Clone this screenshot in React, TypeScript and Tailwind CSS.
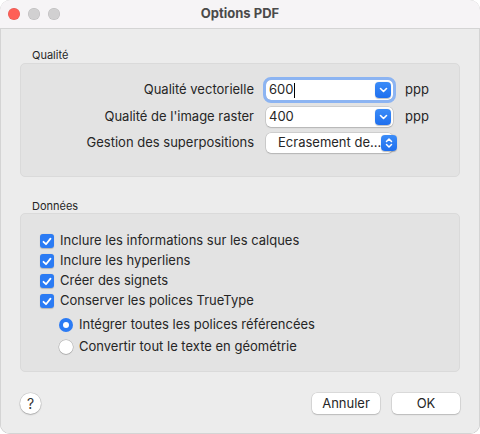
import React from "react";

const font = { fontFamily: "Inter, 'Noto Sans', sans-serif" };

function Chevron({ double }: { double?: boolean }) {
  return (
    <span className="flex h-[16px] w-[16px] shrink-0 items-center justify-center rounded-[4px] bg-gradient-to-b from-[#3b8cf8] to-[#1f6fee] shadow-[0_0.5px_1px_rgba(0,0,0,0.25)]">
      {double ? (
        <svg width="8" height="12" viewBox="0 0 8 12" fill="none">
          <path d="M1.5 4.5L4 2l2.5 2.5M1.5 7.5L4 10l2.5-2.5" stroke="white" strokeWidth="1.5" strokeLinecap="round" strokeLinejoin="round" />
        </svg>
      ) : (
        <svg width="9" height="6" viewBox="0 0 9 6" fill="none">
          <path d="M1.5 1.5L4.5 4.5l3-3" stroke="white" strokeWidth="1.6" strokeLinecap="round" strokeLinejoin="round" />
        </svg>
      )}
    </span>
  );
}

function Field({
  value,
  focused,
  popup,
}: {
  value: string;
  focused?: boolean;
  popup?: boolean;
}) {
  return (
    <div
      className={`flex h-[20px] w-[127px] items-center justify-between rounded-[5px] bg-white pr-[2px] shadow-[0_0_0_0.5px_rgba(0,0,0,0.18),0_1px_1.5px_rgba(0,0,0,0.12)] ${
        focused ? "outline outline-[3px] outline-[#8cb4f2]" : ""
      } ${popup ? "pl-[12px]" : "pl-[3px]"}`}
    >
      <span className="flex items-center whitespace-nowrap text-[13px] text-[#262626]">
        {value}
        {focused && <span className="ml-[1px] inline-block h-[15px] w-[1px] bg-black" />}
      </span>
      <Chevron double={popup} />
    </div>
  );
}

function Row({ label, children, className }: { label: string; children: React.ReactNode; className?: string }) {
  return (
    <div className={`flex h-[22px] items-center ${className ?? ""}`}>
      <span className="w-[233px] text-right text-[13px] text-[#262626]">{label}</span>
      <div className="ml-[12px]">{children}</div>
    </div>
  );
}

function Check({ label }: { label: string }) {
  return (
    <div className="flex h-[20px] items-center">
      <span className="flex h-[14px] w-[14px] items-center justify-center rounded-[3px] bg-[#2b7bf4] shadow-[0_0.5px_1px_rgba(0,0,0,0.2)]">
        <svg width="10" height="9" viewBox="0 0 10 9" fill="none">
          <path d="M1.5 4.8L4 7.2 8.5 1.6" stroke="white" strokeWidth="1.8" strokeLinecap="round" strokeLinejoin="round" />
        </svg>
      </span>
      <span className="ml-[6px] text-[13px] text-[#262626]">{label}</span>
    </div>
  );
}

function Radio({ label, on }: { label: string; on?: boolean }) {
  return (
    <div className="flex h-[22px] items-center">
      {on ? (
        <span className="flex h-[14px] w-[14px] items-center justify-center rounded-full bg-[#2b7bf4]">
          <span className="h-[6px] w-[6px] rounded-full bg-white" />
        </span>
      ) : (
        <span className="h-[14px] w-[14px] rounded-full bg-white shadow-[0_0_0_0.5px_rgba(0,0,0,0.25),0_1px_1px_rgba(0,0,0,0.12)]" />
      )}
      <span className="ml-[6px] text-[13px] text-[#262626]">{label}</span>
    </div>
  );
}

function Button({ children }: { children: React.ReactNode }) {
  return (
    <button className="flex h-[21px] w-[68px] items-center justify-center rounded-[5px] bg-white text-[13px] text-[#262626] shadow-[0_0_0_0.5px_rgba(0,0,0,0.15),0_1px_1.5px_rgba(0,0,0,0.15)]">
      {children}
    </button>
  );
}

export default function App() {
  return (
    <div className="h-[434px] w-[480px] bg-white" style={font}>
      <div className="flex h-[434px] w-[480px] flex-col overflow-hidden rounded-[10px] bg-[#ececec] shadow-[inset_0_0_0_0.5px_rgba(0,0,0,0.2)]">
        {/* Title bar */}
        <div className="relative flex h-[29px] shrink-0 items-center justify-center border-b border-[#d4d4d4] bg-[#f6f4f6]">
          <div className="absolute left-[8px] top-[8px] flex gap-[8px]">
            <span className="h-[12px] w-[12px] rounded-full bg-[#fe5f57] shadow-[inset_0_0_0_0.5px_rgba(0,0,0,0.12)]" />
            <span className="h-[12px] w-[12px] rounded-full bg-[#d1d0d1] shadow-[inset_0_0_0_0.5px_rgba(0,0,0,0.12)]" />
            <span className="h-[12px] w-[12px] rounded-full bg-[#d1d0d1] shadow-[inset_0_0_0_0.5px_rgba(0,0,0,0.12)]" />
          </div>
          <span className="text-[13px] font-bold text-[#4a4a4a]">Options PDF</span>
        </div>

        <div className="flex flex-col px-[20px]">
          {/* Qualité */}
          <span className="mt-[19px] pl-[12px] text-[11px] leading-[14px] text-[#262626]">Qualité</span>
          <div className="mt-[1px] flex h-[114px] w-[440px] flex-col rounded-[5px] border border-[#dadada] bg-[#e3e3e3] pt-[15px]">
            <Row label="Qualité vectorielle">
              <div className="flex items-center">
                <Field value="600" focused />
                <span className="ml-[12px] text-[13px] text-[#262626]">ppp</span>
              </div>
            </Row>
            <Row label="Qualité de l'image raster" className="mt-[5px]">
              <div className="flex items-center">
                <Field value="400" />
                <span className="ml-[12px] text-[13px] text-[#262626]">ppp</span>
              </div>
            </Row>
            <Row label="Gestion des superpositions" className="mt-[4px]">
              <Field value="Ecrasement de..." popup />
            </Row>
          </div>

          {/* Données */}
          <span className="mt-[22px] pl-[12px] text-[11px] leading-[14px] text-[#262626]">Données</span>
          <div className="flex h-[159px] w-[440px] flex-col rounded-[5px] border border-[#dadada] bg-[#e3e3e3] pl-[19px] pt-[17px]">
            <Check label="Inclure les informations sur les calques" />
            <Check label="Inclure les hyperliens" />
            <Check label="Créer des signets" />
            <Check label="Conserver les polices TrueType" />
            <div className="ml-[19px] mt-[3px] flex flex-col">
              <Radio label="Intégrer toutes les polices référencées" on />
              <Radio label="Convertir tout le texte en géométrie" />
            </div>
          </div>

          {/* Buttons */}
          <div className="mt-[21px] flex items-center">
            <span className="flex h-[21px] w-[21px] items-center justify-center rounded-full bg-white text-[14px] text-[#333] shadow-[0_0_0_0.5px_rgba(0,0,0,0.15),0_1px_1.5px_rgba(0,0,0,0.2)]">
              ?
            </span>
            <div className="ml-auto flex gap-[12px]">
              <Button>Annuler</Button>
              <Button>OK</Button>
            </div>
          </div>
        </div>
      </div>
    </div>
  );
}
